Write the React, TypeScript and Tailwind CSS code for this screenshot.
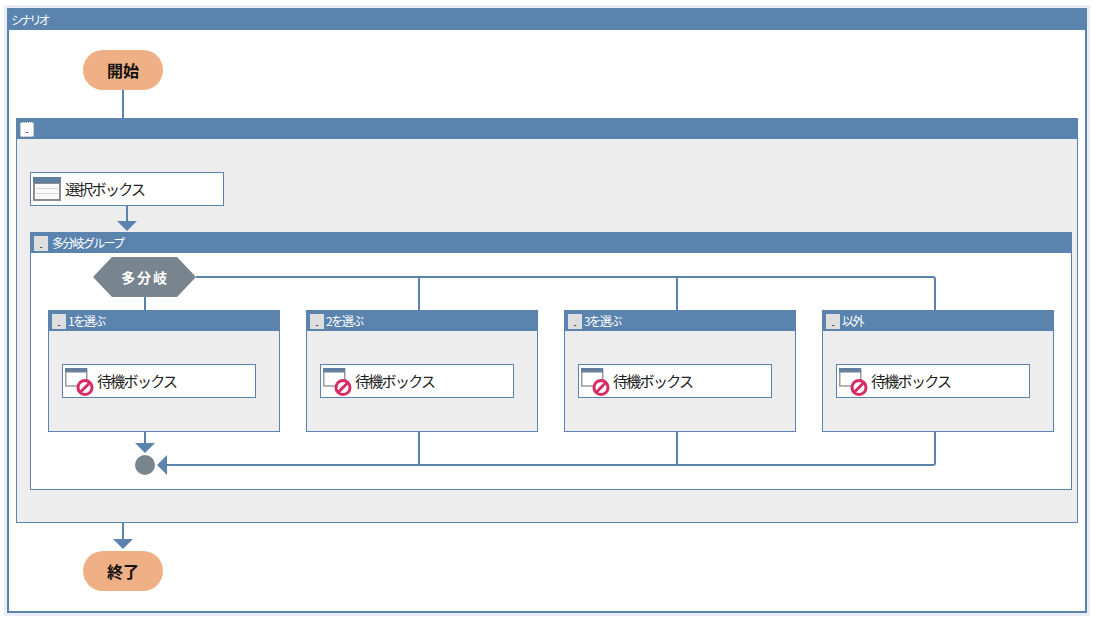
const JP = "font-['Noto_Sans_CJK_JP','Liberation_Sans',sans-serif]";

const CASES = ["1を選ぶ", "2を選ぶ", "3を選ぶ", "以外"];

function CollapseButton({ focused = false }: { focused?: boolean }) {
  return (
    <span
      className={
        "flex h-[15px] w-[14px] shrink-0 items-end justify-center text-[9px] leading-[9px] tracking-normal text-black " +
        (focused
          ? "rounded-[2px] border border-dotted border-[#9a9a9a] bg-white"
          : "bg-[#dedede]")
      }
    >
      -
    </span>
  );
}

function SelectIcon() {
  return (
    <svg width="28" height="24" viewBox="0 0 28 24" className="shrink-0">
      <rect x="0" y="0" width="28" height="24" fill="#8c8c8c" />
      <rect x="0" y="0" width="28" height="6" fill="#5f7f9f" />
      <rect x="2" y="7" width="24" height="15" fill="#fafafa" />
      <path d="M3 11.5h22M3 16.5h22" stroke="#d6d6d6" strokeWidth="1" />
    </svg>
  );
}

function WaitIcon() {
  return (
    <svg width="30" height="28" viewBox="0 0 30 28" className="shrink-0">
      <rect x="0.75" y="1" width="21" height="17" fill="#fff" stroke="#9a9a9a" strokeWidth="1.5" />
      <rect x="0" y="0" width="22" height="4.5" fill="#64809e" />
      <circle cx="20" cy="19.5" r="7" fill="#fff" stroke="#d92b63" strokeWidth="3" />
      <path d="M15.3 24.2 24.7 14.8" stroke="#d92b63" strokeWidth="3" />
    </svg>
  );
}

function Connectors() {
  const c = "#5a83ae";
  return (
    <svg
      width="1097"
      height="623"
      viewBox="0 0 1097 623"
      className="pointer-events-none absolute left-0 top-0"
    >
      <g stroke={c} strokeWidth="2" fill="none">
        <path d="M123 90V118" />
        <path d="M127 206V222" />
        <path d="M145 297V310" />
        <path d="M196 277H933Q935 277 935 279V310" />
        <path d="M419 277V310M677 277V310" />
        <path d="M145 432V444" />
        <path d="M165 465H933Q935 465 935 463V432" />
        <path d="M419 432V465M677 432V465" />
        <path d="M123 523V540" />
      </g>
      <g fill={c}>
        <polygon points="117,221 137,221 127,231" />
        <polygon points="135,443 155,443 145,453" />
        <polygon points="157,465 167,455 167,475" />
        <polygon points="113,539 133,539 123,549" />
      </g>
    </svg>
  );
}

function CaseBlock({ label }: { label: string }) {
  return (
    <div className="h-[122px] w-[232px] border border-[#5a83ae] bg-[#ededed]">
      <div className="flex h-[20px] items-center gap-[2px] bg-[#5a83ae] pl-[3px] text-[12px] tracking-[-1.5px] text-white">
        <CollapseButton />
        {label}
      </div>
      <div className="ml-[13px] mt-[33px] flex h-[34px] w-[194px] items-center border border-[#5a83ae] bg-white pl-[2px] pt-[1px] text-[15px] tracking-[-1.7px] text-[#222]">
        <WaitIcon />
        <span className="ml-[2px]">待機ボックス</span>
      </div>
    </div>
  );
}

export default function App() {
  return (
    <div className={"relative h-[623px] w-[1097px] overflow-hidden bg-white pl-[4px] pt-[5px] " + JP}>
      <div className="h-[611px] w-[1086px] bg-[#e9ecf9] p-[3px]">
        <div className="flex h-[605px] w-[1080px] flex-col border-2 border-[#5a83ae] bg-white">
          <div className="flex h-[20px] shrink-0 items-center bg-[#5a83ae] pl-[2px] text-[12px] tracking-[-2.8px] text-white">
            シナリオ
          </div>
          <div className="pl-[7px] pt-[20px]">
            <div className="ml-[67px] flex h-[40px] w-[80px] items-center justify-center rounded-[20px] bg-[#eeb084] text-[16px] font-bold text-[#111]">
              開始
            </div>

            <div className="mt-[28px] h-[405px] w-[1062px] border border-[#5a83ae] bg-[#ededed]">
              <div className="flex h-[20px] items-center bg-[#5a83ae] pl-[3px]">
                <CollapseButton focused />
              </div>
              <div className="ml-[13px] mt-[33px] flex h-[34px] w-[194px] items-center border border-[#5a83ae] bg-white pl-[2px] text-[15px] tracking-[-1.7px] text-[#222]">
                <SelectIcon />
                <span className="ml-[4px]">選択ボックス</span>
              </div>

              <div className="ml-[13px] mt-[26px] h-[258px] w-[1042px] border border-[#5a83ae] bg-white">
                <div className="flex h-[20px] items-center gap-[4px] bg-[#5a83ae] pl-[3px] text-[12px] tracking-[-1.7px] text-white">
                  <CollapseButton />
                  多分岐グループ
                </div>
                <div className="ml-[62px] mt-[4px] flex h-[40px] w-[103px] items-center justify-center bg-[#78848e] pl-[1px] text-[14px] font-bold tracking-[1.8px] text-white [clip-path:polygon(19px_0,84px_0,100%_50%,84px_100%,19px_100%,0_50%)]">
                  多分岐
                </div>
                <div className="ml-[17px] mt-[13px] flex gap-[26px]">
                  {CASES.map((label) => (
                    <CaseBlock key={label} label={label} />
                  ))}
                </div>
                <div className="ml-[104px] mt-[23px] h-[20px] w-[20px] rounded-full bg-[#78848e]" />
              </div>
            </div>

            <div className="ml-[67px] mt-[28px] flex h-[40px] w-[80px] items-center justify-center rounded-[20px] bg-[#eeb084] text-[16px] font-bold text-[#111]">
              終了
            </div>
          </div>
        </div>
      </div>
      <Connectors />
    </div>
  );
}
